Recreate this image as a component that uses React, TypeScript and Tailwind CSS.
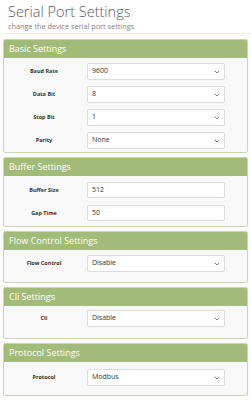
const font = { fontFamily: "'Open Sans', 'Liberation Sans', sans-serif" };

function Chevron() {
  return (
    <svg width="6" height="4" viewBox="0 0 6 4" className="shrink-0">
      <path d="M0.8 0.8 L3 3 L5.2 0.8" fill="none" stroke="#666" strokeWidth="0.9" />
    </svg>
  );
}

function Row({ label, value, select = true, h = "h-[17px]" }: { label: string; value: string; select?: boolean; h?: string }) {
  return (
    <div className="flex items-center">
      <div className="w-[80px] text-center text-[5.5px] font-bold text-[#333]">{label}</div>
      <div className={`ml-[3px] w-[138px] ${h} flex items-center justify-between border border-[#dcdcdc] bg-white rounded-[2px] pl-[4px] pr-[4px] text-[7px] text-[#333]`}>
        <span>{value}</span>
        {select && <Chevron />}
      </div>
    </div>
  );
}

function Panel({ title, pt, pb, gap = "gap-[6px]", children }: { title: string; pt: string; pb: string; gap?: string; children: React.ReactNode }) {
  return (
    <div className="border border-[#c9d6b3] rounded-[2px] bg-[#f8f8f8] overflow-hidden">
      <div className="h-[18px] bg-[#a3bb79] text-white text-[9px] px-[5px] flex items-center">{title}</div>
      <div className={`flex flex-col ${gap} ${pt} ${pb}`}>{children}</div>
    </div>
  );
}

export default function App() {
  return (
    <div className="w-[251px] h-[400px] overflow-hidden bg-white" style={font}>
      <div className="px-[8px] pt-[2px] h-[34px] border-b border-[#eeeeee]">
        <div className="text-[14.5px] font-light text-[#5a5a5a] leading-[20px]">Serial Port Settings</div>
        <div className="text-[7.3px] text-[#808080] leading-[9px]">change the device serial port settings</div>
      </div>
      <div className="px-[3px] pt-[5px] flex flex-col gap-[4px] bg-[#fcfcfc]">
        <Panel title="Basic Settings" pt="pt-[5px]" pb="pb-[3px]">
          <Row label="Baud Rate" value="9600" />
          <Row label="Data Bit" value="8" />
          <Row label="Stop Bit" value="1" />
          <Row label="Parity" value="None" />
        </Panel>
        <Panel title="Buffer Settings" pt="pt-[6px]" pb="pb-[5px]" gap="gap-[7px]">
          <Row label="Buffer Size" value="512" select={false} h="h-[16px]" />
          <Row label="Gap Time" value="50" select={false} h="h-[16px]" />
        </Panel>
        <Panel title="Flow Control Settings" pt="pt-[5px]" pb="pb-[10px]">
          <Row label="Flow Control" value="Disable" />
        </Panel>
        <Panel title="Cli Settings" pt="pt-[4px]" pb="pb-[11px]">
          <Row label="Cli" value="Disable" />
        </Panel>
        <Panel title="Protocol Settings" pt="pt-[7px]" pb="pb-[9px]">
          <Row label="Protocol" value="Modbus" />
        </Panel>
      </div>
    </div>
  );
}
